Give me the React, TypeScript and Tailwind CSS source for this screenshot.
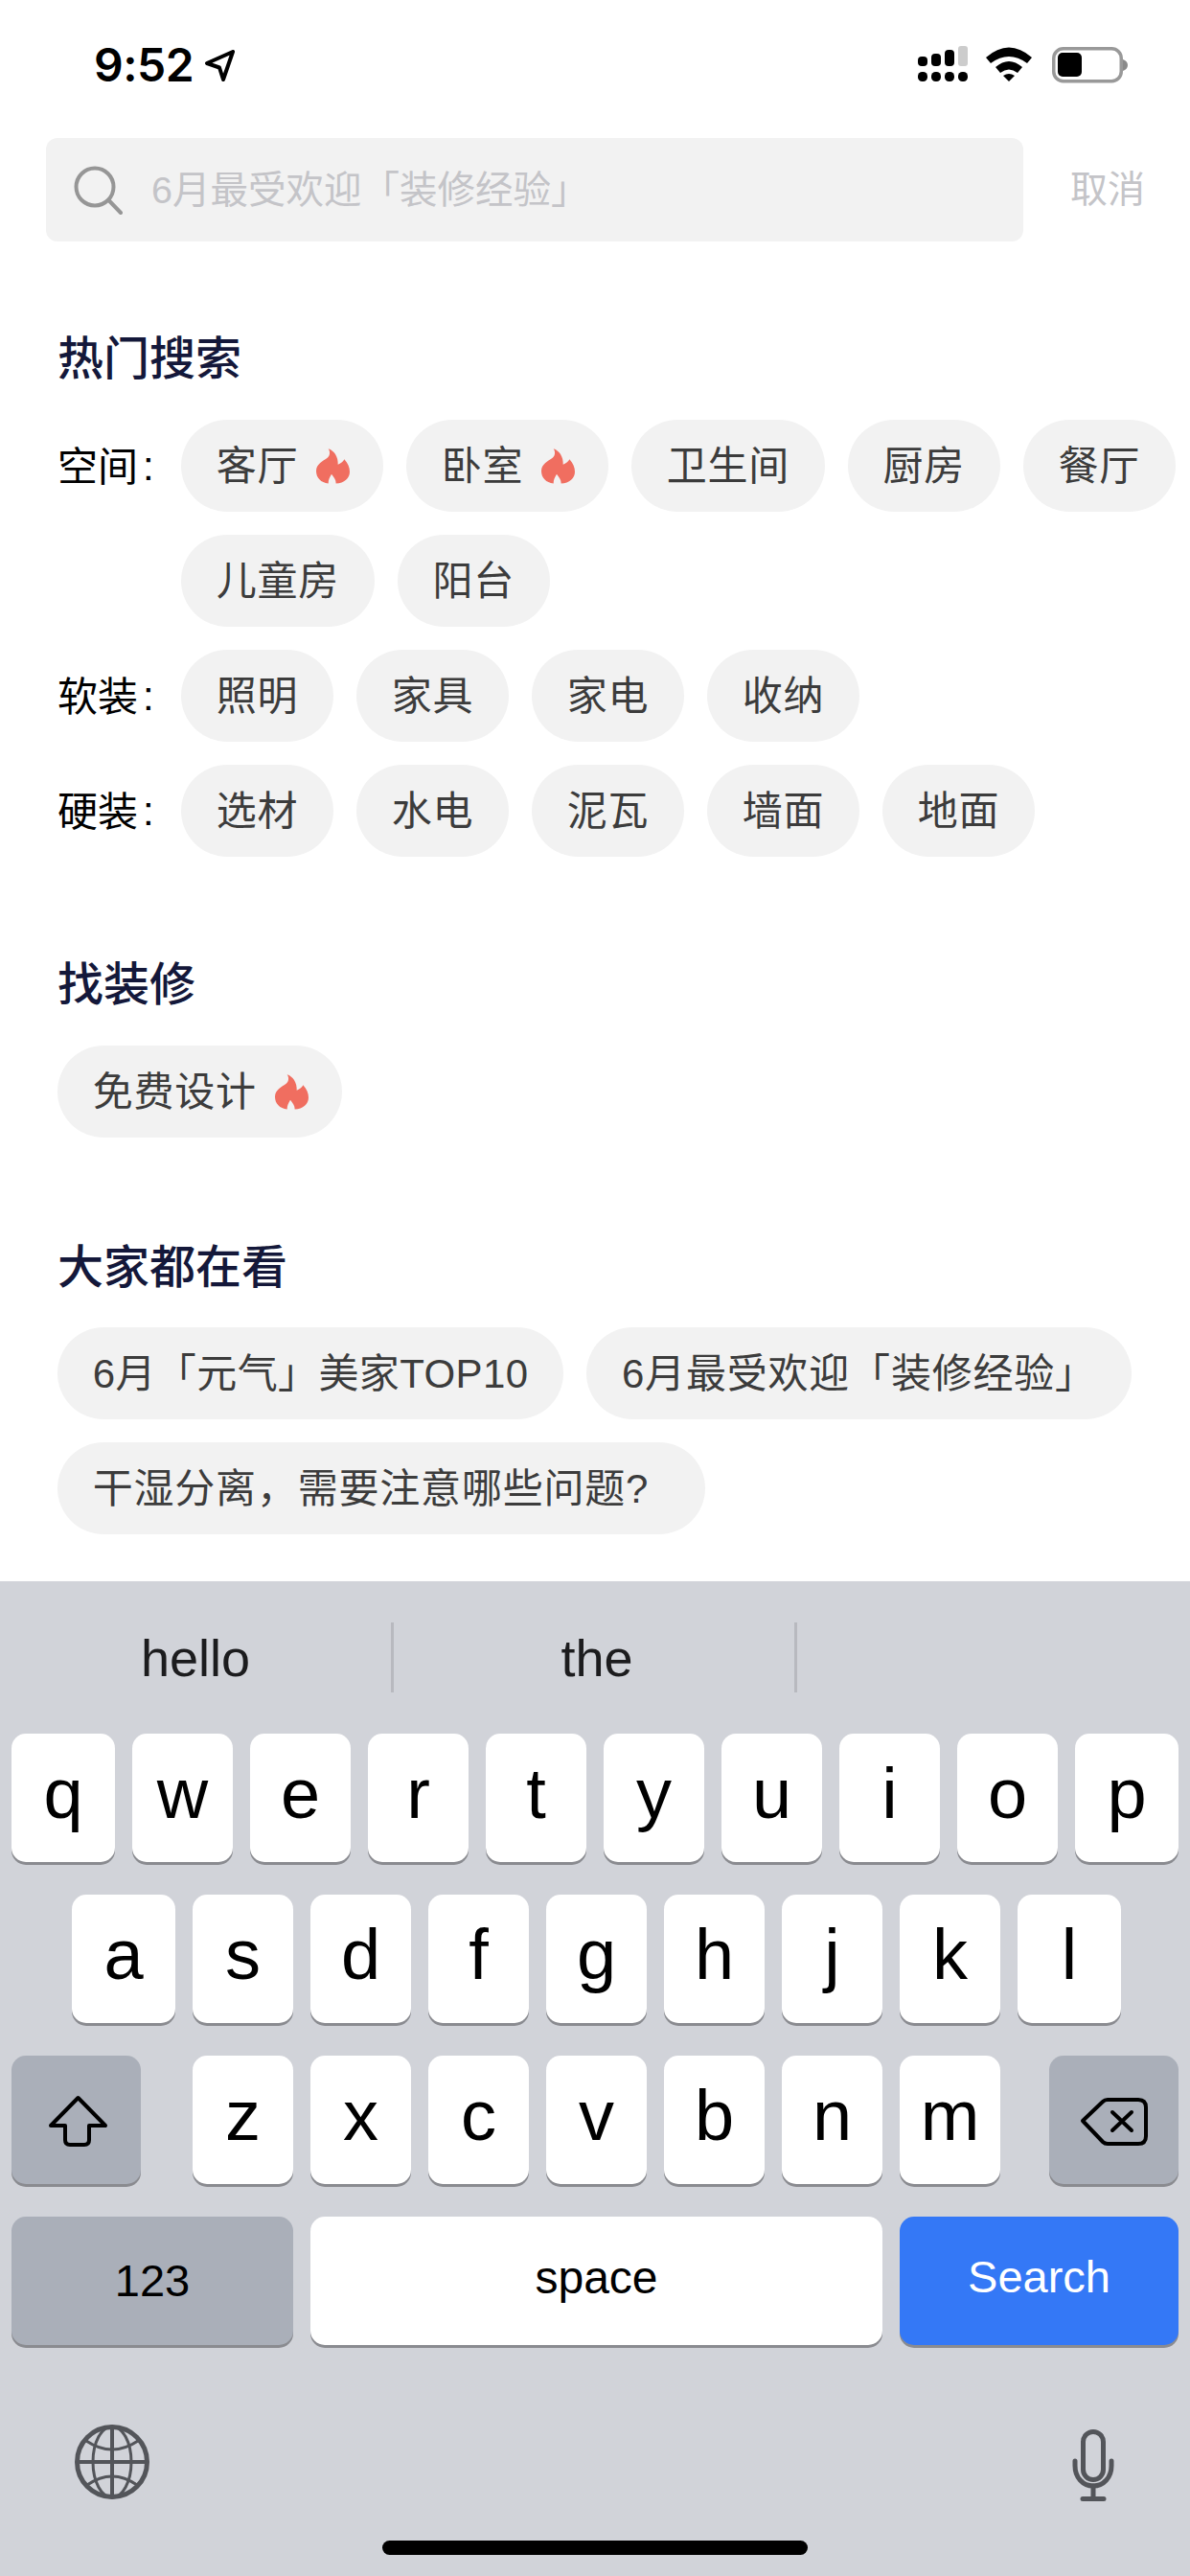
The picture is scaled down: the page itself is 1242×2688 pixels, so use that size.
import React from "react";

function Flame() {
  return (
    <svg width="35" height="37" viewBox="0 0 105 110" className="mr-[-2px] ml-[2px] shrink-0">
      <path
        d="M38 0C55 5 70 25 68 50C76 46 85 40 88 33C100 45 105 60 105 72C105 92 88 108 62 109C62 98 56 90 48 80C42 90 38 98 38 109C15 106 0 92 0 70C0 48 20 40 36 28C44 20 44 8 38 0Z"
        fill="#f06e60"
      />
    </svg>
  );
}

function Chip({ text, hot, tight }: { text: string; hot?: boolean; tight?: boolean }) {
  return (
    <div
      className={
        (tight ? "tracking-[0.4px] " : "tracking-[0.8px] ") +
        "flex h-[96px] items-center gap-[17px] rounded-[48px] bg-[#f2f2f2] px-[36.7px] text-[42px] leading-[60px] whitespace-nowrap text-[#3c3c3c]"
      }
    >
      <span className="pt-[2px]">{text}</span>
      {hot && <Flame />}
    </div>
  );
}

function Row({ label, items }: { label: string; items: { t: string; hot?: boolean }[] }) {
  return (
    <div className="flex">
      <div className="flex h-[96px] w-[129px] shrink-0 items-center text-[42px] text-black">
        <span className="pt-[2px]">{label}</span>
        <span className="ml-[5px]">:</span>
      </div>
      <div className="flex flex-1 flex-wrap gap-[24px]">
        {items.map((i) => (
          <Chip key={i.t} text={i.t} hot={i.hot} />
        ))}
      </div>
    </div>
  );
}

function Heading({ children, className }: { children: string; className: string }) {
  return <div className={"h-[60px] pt-[3px] text-[48px] leading-[60px] font-medium text-[#14183a] " + className}>{children}</div>;
}

function Key({ label, wide }: { label: string; wide?: boolean }) {
  return (
    <div
      className={
        (wide ? "w-[108px] " : "w-[105px] ") +
        "flex h-[134px] items-center justify-center rounded-[15px] bg-white pb-[8px] text-[74px] leading-none text-black shadow-[0_3px_0_#8a8b90]"
      }
    >
      {label}
    </div>
  );
}

function StatusIcons() {
  return (
    <div className="flex items-start">
      <svg width="52" height="37" viewBox="0 0 52 37" className="mt-[48px]">
        <rect x="0" y="11" width="10" height="10" rx="4" fill="#000" />
        <rect x="14" y="8" width="10" height="13" rx="4" fill="#000" />
        <rect x="28" y="4" width="10" height="17" rx="4" fill="#000" />
        <rect x="42" y="0" width="10" height="21" rx="3" fill="#cccccc" />
        <rect x="0" y="27" width="10" height="10" rx="4.5" fill="#000" />
        <rect x="14" y="27" width="10" height="10" rx="4.5" fill="#000" />
        <rect x="28" y="27" width="10" height="10" rx="4.5" fill="#000" />
        <rect x="42" y="27" width="10" height="10" rx="4.5" fill="#000" />
      </svg>
      <svg width="48" height="36" viewBox="0 0 48 36" className="mt-[49px] ml-[19px]">
        <path d="M0 11Q24 -10 48 11L43 17Q24 3 5 17Z" fill="#000" />
        <path d="M10 21Q24 9 38 21L33 27Q24 20 15 27Z" fill="#000" />
        <path d="M18 30Q24 26 30 30L24 36Z" fill="#000" />
      </svg>
      <svg width="79" height="38" viewBox="0 0 79 38" className="mt-[49px] ml-[21px]">
        <rect x="1.75" y="1.75" width="70.5" height="34" rx="10" fill="none" stroke="#999999" strokeWidth="3.5" />
        <rect x="6" y="6" width="25" height="25" rx="5" fill="#000" />
        <path d="M74 13C77 14 79 16 79 19C79 22 77 24 74 25Z" fill="#8a8a8a" />
      </svg>
    </div>
  );
}

const r1 = "q w e r t y u i o p".split(" ");
const r2 = "a s d f g h j k l".split(" ");
const r3 = "z x c v b n m".split(" ");

export default function App() {
  return (
    <div className="flex h-[2688px] w-[1242px] flex-col overflow-hidden bg-white font-['Liberation_Sans','Noto_Sans_CJK_SC',sans-serif]">
      <div className="flex h-[144px] shrink-0 items-start justify-between pr-[65px] pl-[98px]">
        <div className="mt-[38px] flex items-start">
          <span className="w-[104px] font-['Inter',sans-serif] text-[48px] leading-[60px] font-semibold tracking-[-0.5px] text-black">9:52</span>
          <svg width="32" height="33" viewBox="0 0 32 33" className="mt-[14px] ml-[11px]">
            <path d="M30 2L3 14L16 18.5L20 31Z" fill="none" stroke="#000" strokeWidth="4" strokeLinejoin="round" />
          </svg>
        </div>
        <StatusIcons />
      </div>

      <div className="flex h-[108px] shrink-0 items-center pl-[48px]">
        <div className="flex h-[108px] w-[1020px] items-center rounded-[12px] bg-[#f2f2f2] pl-[28px]">
          <svg width="52" height="52" viewBox="0 0 52 52" className="shrink-0">
            <circle cx="23" cy="23" r="19.5" fill="none" stroke="#969696" strokeWidth="4" />
            <path d="M37.5 37L50 50" stroke="#969696" strokeWidth="4" strokeLinecap="round" />
          </svg>
          <span className="ml-[30px] text-[39.5px] leading-[60px] text-[#c4c4c8]">6月最受欢迎「装修经验」</span>
        </div>
        <span className="ml-[49px] text-[39px] leading-[60px] text-[#c4c4c8]">取消</span>
      </div>

      <div className="flex flex-col pl-[60px]">
        <Heading className="mt-[90px]">热门搜索</Heading>
        <div className="mt-[36px] flex flex-col gap-[24px]">
          <Row
            label="空间"
            items={[
              { t: "客厅", hot: true },
              { t: "卧室", hot: true },
              { t: "卫生间" },
              { t: "厨房" },
              { t: "餐厅" },
              { t: "儿童房" },
              { t: "阳台" },
            ]}
          />
          <Row label="软装" items={[{ t: "照明" }, { t: "家具" }, { t: "家电" }, { t: "收纳" }]} />
          <Row label="硬装" items={[{ t: "选材" }, { t: "水电" }, { t: "泥瓦" }, { t: "墙面" }, { t: "地面" }]} />
        </div>

        <Heading className="mt-[101px]">找装修</Heading>
        <div className="mt-[36px] flex">
          <Chip text="免费设计" hot />
        </div>

        <Heading className="mt-[103px]">大家都在看</Heading>
        <div className="mt-[35px] flex flex-wrap gap-[24px]">
          <Chip text="6月「元气」美家TOP10" tight />
          <Chip text="6月最受欢迎「装修经验」" />
          <Chip text={"干湿分离\uFF0C需要注意哪些问题?\u2002"} />
        </div>
      </div>

      <div className="mt-auto flex h-[1038px] shrink-0 flex-col bg-[#d1d3d9]">
        <div className="flex h-[159px] shrink-0 items-start text-[54px] leading-[60px] text-[#1c1c1e]">
          <div className="flex h-[159px] w-[408px] items-center justify-center">hello</div>
          <div className="mt-[43px] h-[73px] w-[3px] bg-[#b8b9bf]" />
          <div className="flex h-[159px] w-[418px] items-center justify-center pl-[6px]">the</div>
          <div className="mt-[43px] h-[73px] w-[3px] bg-[#b8b9bf]" />
        </div>

        <div className="flex flex-col gap-[34px]">
          <div className="flex gap-[18px] pl-[12px]">
            {r1.map((k, i) => (
              <Key key={k} label={k} wide={i === 0 || i === 9} />
            ))}
          </div>
          <div className="flex gap-[18px] pl-[75px]">
            {r2.map((k, i) => (
              <Key key={k} label={k} wide={i === 0 || i === 8} />
            ))}
          </div>
          <div className="flex pl-[12px]">
            <div className="flex h-[134px] w-[135px] items-center justify-center rounded-[15px] bg-[#aaafb9] shadow-[0_3px_0_#8a8b90]">
              <svg width="100" height="80" viewBox="0 0 100 80" className="mt-[-4px]">
                <path
                  d="M51.5 19L80 48H63V63Q63 68 58 68H43Q38 68 38 63V48H23Z"
                  fill="none"
                  stroke="#000"
                  strokeWidth="4"
                  strokeLinejoin="round"
                />
              </svg>
            </div>
            <div className="ml-[54px] flex gap-[18px]">
              {r3.map((k) => (
                <Key key={k} label={k} />
              ))}
            </div>
            <div className="ml-[51px] flex h-[134px] w-[135px] items-center justify-center rounded-[15px] bg-[#aaafb9] shadow-[0_3px_0_#8a8b90]">
              <svg width="100" height="80" viewBox="0 0 100 80" className="mt-[-4px] ml-[-5px]">
                <path
                  d="M20 43L41 23Q43 21 46 21H78Q86 21 86 29V59Q86 67 78 67H46Q43 67 41 65Z"
                  fill="none"
                  stroke="#000"
                  strokeWidth="4"
                  strokeLinejoin="round"
                />
                <path d="M51 34L71 53M71 34L51 53" stroke="#000" strokeWidth="4" strokeLinecap="round" />
              </svg>
            </div>
          </div>
          <div className="flex gap-[18px] pl-[12px]">
            <div className="flex h-[134px] w-[294px] items-center justify-center rounded-[15px] bg-[#aaafb9] text-[47px] text-black shadow-[0_3px_0_#8a8b90]">
              123
            </div>
            <div className="flex h-[134px] w-[597px] items-center justify-center rounded-[15px] bg-white pb-[6px] text-[48px] text-black shadow-[0_3px_0_#8a8b90]">
              space
            </div>
            <div className="flex h-[134px] w-[291px] items-center justify-center rounded-[15px] bg-[#3478f6] pb-[8px] text-[47px] text-white shadow-[0_3px_0_#8a8b90]">
              Search
            </div>
          </div>
        </div>

        <div className="mt-[83px] flex items-start justify-between pr-[79px] pl-[78px]">
          <svg width="78" height="78" viewBox="0 0 78 78">
            <g fill="none" stroke="#53555a">
              <circle cx="39" cy="39" r="36.5" strokeWidth="5" />
              <ellipse cx="39" cy="39" rx="20" ry="37" strokeWidth="3" />
              <path d="M39 2V76M2 39H76" strokeWidth="4" />
              <path d="M12 17Q39 35 66 17M13 63Q39 45 65 63" strokeWidth="3" />
            </g>
          </svg>
          <svg width="44" height="75" viewBox="0 0 44 75" className="mt-[5px]">
            <g fill="none" stroke="#53555a" strokeWidth="5" strokeLinecap="round">
              <rect x="11.5" y="2.5" width="21" height="50" rx="10.5" />
              <path d="M3 33V38C3 50 11 59 22 59C33 59 41 50 41 38V33" />
              <path d="M22 59V72M11 72.5H33" />
            </g>
          </svg>
        </div>

        <div className="mt-[41px] ml-[399px] h-[15px] w-[444px] rounded-full bg-black" />
      </div>
    </div>
  );
}
